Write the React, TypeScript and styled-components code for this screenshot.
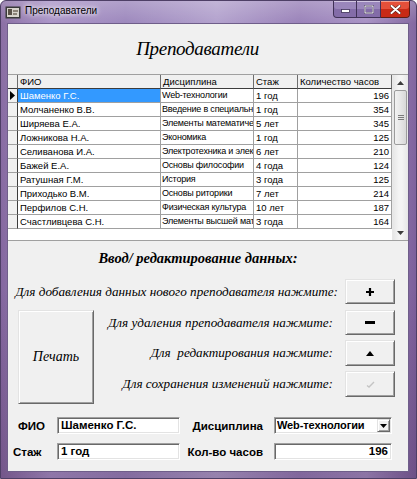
import React from "react";
import styled, { createGlobalStyle } from "styled-components";

const GlobalStyle = createGlobalStyle`
  html, body {
    margin: 0;
    padding: 0;
    background: #fff;
  }
  body {
    width: 417px;
    height: 479px;
    overflow: hidden;
    font-family: "Liberation Sans", Arial, sans-serif;
  }
`;

interface ITeacher {
    fio: string;
    subject: string;
    exp: string;
    hours: number;
}

// дисциплины обрезаны так же, как в ячейках исходной таблицы
const teachers: ITeacher[] = [
    { fio: "Шаменко Г.С.", subject: "Web-технологии", exp: "1 год", hours: 196 },
    { fio: "Молчаненко В.В.", subject: "Введение в специальн", exp: "1 год", hours: 354 },
    { fio: "Ширяева Е.А.", subject: "Элементы математиче", exp: "5 лет", hours: 345 },
    { fio: "Ложникова Н.А.", subject: "Экономика", exp: "1 год", hours: 125 },
    { fio: "Селиванова И.А.", subject: "Электротехника и элек", exp: "6 лет", hours: 210 },
    { fio: "Бажей Е.А.", subject: "Основы философии", exp: "4 года", hours: 124 },
    { fio: "Ратушная Г.М.", subject: "История", exp: "3 года", hours: 125 },
    { fio: "Приходько В.М.", subject: "Основы риторики", exp: "7 лет", hours: 214 },
    { fio: "Перфилов С.Н.", subject: "Физическая культура", exp: "10 лет", hours: 187 },
    { fio: "Счастливцева С.Н.", subject: "Элементы высшей мат", exp: "3 года", hours: 164 },
];

const GRID_COLS = "10px 143px 93px 44px 94px";

const App = () => {
    return (
        <>
            <GlobalStyle />
            <Window>
                <TitleBar>
                    <TitleIcon width="16" height="13" viewBox="0 0 16 13">
                        <rect x="0.5" y="0.5" width="15" height="12" fill="#3a3a3a" />
                        <rect x="2" y="2" width="12" height="9" fill="#d8d4cc" />
                        <rect x="3" y="3" width="4" height="6" fill="#5a5248" />
                        <rect x="8" y="4" width="5" height="2" fill="#8c8478" />
                        <rect x="8" y="7" width="4" height="2" fill="#8c8478" />
                    </TitleIcon>
                    <TitleText>Преподаватели</TitleText>
                    <CaptionButtons>
                        <CaptionBtn $first>
                            <svg width="9" height="8" viewBox="0 0 9 8">
                                <rect x="0.5" y="4.5" width="8" height="3" fill="#fff" stroke="#3e3056" strokeWidth="0.8" />
                            </svg>
                        </CaptionBtn>
                        <CaptionBtn>
                            <svg width="10" height="9" viewBox="0 0 10 9">
                                <rect x="1" y="1" width="8" height="7" fill="none" stroke="#3e3056" strokeWidth="2" />
                                <rect x="1" y="1" width="8" height="7" fill="none" stroke="#fff" strokeWidth="1" />
                            </svg>
                        </CaptionBtn>
                        <CloseBtn>
                            <svg width="11" height="9" viewBox="0 0 11 9">
                                <path d="M1.5 1 L9.5 8 M9.5 1 L1.5 8" stroke="#5a1c14" strokeWidth="3.2" strokeLinecap="round" />
                                <path d="M1.5 1 L9.5 8 M9.5 1 L1.5 8" stroke="#fff" strokeWidth="2" strokeLinecap="round" />
                            </svg>
                        </CloseBtn>
                    </CaptionButtons>
                </TitleBar>

                <Client>
                    <Heading>Преподаватели</Heading>

                    <DataGrid>
                        <Table>
                            <GridRow>
                                <HeadCell />
                                <HeadCell>ФИО</HeadCell>
                                <HeadCell>Дисциплина</HeadCell>
                                <HeadCell>Стаж</HeadCell>
                                <HeadCell>Количество часов</HeadCell>
                            </GridRow>
                            {teachers.map((t, i) => (
                                <GridRow key={t.fio}>
                                    <IndicatorCell>
                                        {i === 0 && (
                                            <svg width="5" height="9" viewBox="0 0 5 9">
                                                <path d="M0 0 L5 4.5 L0 9 Z" fill="#000" />
                                            </svg>
                                        )}
                                    </IndicatorCell>
                                    <Cell $selected={i === 0}>{t.fio}</Cell>
                                    <Cell $tight>{t.subject}</Cell>
                                    <Cell>{t.exp}</Cell>
                                    <Cell $right>{t.hours}</Cell>
                                </GridRow>
                            ))}
                        </Table>
                        <ScrollBar>
                            <ScrollArrow>
                                <svg width="7" height="4" viewBox="0 0 7 4">
                                    <path d="M0 4 L3.5 0 L7 4 Z" fill="#3c3c3c" />
                                </svg>
                            </ScrollArrow>
                            <ScrollThumb>
                                <svg width="6" height="5" viewBox="0 0 6 5">
                                    <path d="M0 0.5 H6 M0 2.5 H6 M0 4.5 H6" stroke="#7a7a7a" strokeWidth="1" />
                                </svg>
                            </ScrollThumb>
                            <ScrollTrack />
                            <ScrollArrow>
                                <svg width="7" height="4" viewBox="0 0 7 4">
                                    <path d="M0 0 L3.5 4 L7 0 Z" fill="#3c3c3c" />
                                </svg>
                            </ScrollArrow>
                        </ScrollBar>
                    </DataGrid>

                    <SectionTitle>Ввод/ редактирование данных:</SectionTitle>

                    <ActionRow $gap={7}>
                        <ActionLabel>Для добавления данных нового преподавателя нажмите:</ActionLabel>
                        <Button3D $w={50} $h={25}>
                            <svg width="8" height="8" viewBox="0 0 8 8">
                                <path d="M4 0 V8 M0 4 H8" stroke="#000" strokeWidth="2.2" />
                            </svg>
                        </Button3D>
                    </ActionRow>

                    <ActionBlock>
                        <PrintButton $w={76} $h={94}>Печать</PrintButton>
                        <ActionList>
                            <ActionRow $gap={12}>
                                <ActionLabel>Для удаления преподавателя нажмите:</ActionLabel>
                                <Button3D $w={50} $h={25}>
                                    <svg width="10" height="3" viewBox="0 0 10 3">
                                        <rect width="10" height="3" fill="#000" />
                                    </svg>
                                </Button3D>
                            </ActionRow>
                            <ActionRow $gap={12}>
                                <ActionLabel>Для&nbsp; редактирования нажмите:</ActionLabel>
                                <Button3D $w={50} $h={26}>
                                    <svg width="8" height="5" viewBox="0 0 8 5">
                                        <path d="M0 5 L4 0 L8 5 Z" fill="#000" />
                                    </svg>
                                </Button3D>
                            </ActionRow>
                            <ActionRow $gap={12}>
                                <ActionLabel>Для сохранения изменений нажмите:</ActionLabel>
                                <Button3D $w={50} $h={26}>
                                    <svg width="9" height="7" viewBox="0 0 9 7">
                                        <path d="M1 4.5 L3 6 L8 1" stroke="#c4c4c4" strokeWidth="1.4" fill="none" />
                                    </svg>
                                </Button3D>
                            </ActionRow>
                        </ActionList>
                    </ActionBlock>

                    <Fields>
                        <FieldLabel $left={10}>ФИО</FieldLabel>
                        <TextBox>Шаменко Г.С.</TextBox>
                        <FieldLabel $right={11}>Дисциплина</FieldLabel>
                        <ComboBox>
                            <ComboText>Web-технологии</ComboText>
                            <ComboButton>
                                <svg width="7" height="4" viewBox="0 0 7 4">
                                    <path d="M0 0 L3.5 4 L7 0 Z" fill="#000" />
                                </svg>
                            </ComboButton>
                        </ComboBox>

                        <FieldLabel $left={5}>Стаж</FieldLabel>
                        <TextBox>1 год</TextBox>
                        <FieldLabel $right={11}>Кол-во часов</FieldLabel>
                        <TextBox $right>196</TextBox>
                    </Fields>
                </Client>
            </Window>
        </>
    );
};

export default App;

const Window = styled.div`
    width: 417px;
    height: 479px;
    box-sizing: border-box;
    display: flex;
    flex-direction: column;
    border: 1px solid #4e3f66;
    border-radius: 6px 6px 0 0;
    background:
        linear-gradient(180deg, rgba(255, 255, 255, 0.25) 0px, rgba(255, 255, 255, 0.06) 22px, rgba(0, 0, 0, 0) 60%, rgba(40, 10, 40, 0.18) 100%),
        linear-gradient(90deg, #84679f 0%, #a58ec4 12%, #9781b9 30%, #ae9cca 52%, #947bb5 72%, #a28bc0 88%, #7c5f9b 100%);
`;

const TitleBar = styled.div`
    height: 22px;
    display: flex;
    align-items: flex-start;
    padding-left: 4px;
`;

const TitleIcon = styled.svg`
    margin-top: 5px;
    flex-shrink: 0;
`;

const TitleText = styled.span`
    margin: 4px 0 0 4px;
    font-family: "Liberation Sans", Arial, sans-serif;
    font-size: 10px;
    color: #000;
    text-shadow: 0 0 4px #fff, 0 0 6px rgba(255, 255, 255, 0.8);
`;

const CaptionButtons = styled.div`
    margin-left: auto;
    margin-right: 6px;
    display: flex;
    height: 17px;
`;

const CaptionBtn = styled.div<{ $first?: boolean }>`
    width: 24px;
    height: 17px;
    box-sizing: border-box;
    display: flex;
    align-items: center;
    justify-content: center;
    background: #9a86bb;
    box-shadow: inset 0 -8px 0 #836ca8, inset 0 1px 0 #d2c6e2;
    border: 1px solid #3f3156;
    border-top: none;
    border-left-width: ${(p) => (p.$first ? 1 : 0)}px;
    border-radius: ${(p) => (p.$first ? "0 0 0 4px" : "0")};
`;

const CloseBtn = styled.div`
    width: 29px;
    height: 17px;
    box-sizing: border-box;
    display: flex;
    align-items: center;
    justify-content: center;
    background: #e4503a;
    box-shadow: inset 0 -8px 0 #c82a16, inset 0 1px 0 #f2a090;
    border: 1px solid #5e1d16;
    border-top: none;
    border-left: none;
    border-radius: 0 0 4px 0;
`;

const Client = styled.div`
    flex: 1;
    margin: 0 7px 6px 6px;
    display: flex;
    flex-direction: column;
    background: #f0f0f0;
    border: 1px solid #6f5e8a;
`;

const Heading = styled.div`
    height: 50px;
    padding-right: 21px;
    display: flex;
    align-items: center;
    justify-content: center;
    font-family: "Liberation Serif", "Times New Roman", serif;
    font-style: italic;
    font-size: 19px;
    letter-spacing: -0.3px;
    color: #000;
`;

const DataGrid = styled.div`
    height: 167px;
    box-sizing: border-box;
    display: flex;
    background: #fff;
    border-top: 1px solid #a0a0a0;
    border-bottom: 1px solid #a0a0a0;
`;

const Table = styled.div`
    flex: 1;
    display: flex;
    flex-direction: column;
    overflow: hidden;
`;

const GridRow = styled.div`
    display: grid;
    grid-template-columns: ${GRID_COLS};
    height: 14px;
`;

const HeadCell = styled.div`
    box-sizing: border-box;
    padding: 0 2px;
    background: #f0f0f0;
    border-right: 1px solid #6d6d6d;
    border-bottom: 1px solid #3c3c3c;
    font-size: 9.5px;
    line-height: 13px;
    white-space: nowrap;
    overflow: hidden;
    color: #000;
`;

const IndicatorCell = styled.div`
    box-sizing: border-box;
    background: #f0f0f0;
    border-right: 1px solid #3c3c3c;
    border-bottom: 1px solid #a0a0a0;
    display: flex;
    align-items: center;
    padding-left: 2px;
`;

const Cell = styled.div<{ $selected?: boolean; $right?: boolean; $tight?: boolean }>`
    box-sizing: border-box;
    padding: 0 ${(p) => (p.$tight ? 1 : 2)}px;
    border-right: 1px solid #a0a0a0;
    border-bottom: 1px solid #a0a0a0;
    background: ${(p) => (p.$selected ? "#3399ff" : "#fff")};
    color: ${(p) => (p.$selected ? "#fff" : "#000")};
    text-align: ${(p) => (p.$right ? "right" : "left")};
    font-size: ${(p) => (p.$tight ? 9 : 9.5)}px;
    letter-spacing: ${(p) => (p.$tight ? -0.2 : 0)}px;
    line-height: 13px;
    white-space: nowrap;
    overflow: hidden;
`;

const ScrollBar = styled.div`
    width: 16px;
    display: flex;
    flex-direction: column;
    background: linear-gradient(90deg, #e6e6e6, #f4f4f4 40%, #f4f4f4 60%, #e6e6e6);
    border-left: 1px solid #e8e8e8;
    box-sizing: border-box;
`;

const ScrollArrow = styled.div`
    height: 15px;
    display: flex;
    align-items: center;
    justify-content: center;
`;

const ScrollThumb = styled.div`
    height: 55px;
    margin: 0 1px;
    box-sizing: border-box;
    border: 1px solid #9c9c9c;
    border-radius: 2px;
    background: linear-gradient(90deg, #f2f2f2, #e6e6e6 50%, #d8d8d8);
    display: flex;
    align-items: center;
    justify-content: center;
`;

const ScrollTrack = styled.div`
    flex: 1;
`;

const SectionTitle = styled.div`
    margin-top: 8px;
    height: 18px;
    padding-right: 20px;
    text-align: center;
    font-family: "Liberation Serif", "Times New Roman", serif;
    font-style: italic;
    font-weight: bold;
    font-size: 14.5px;
    line-height: 18px;
    color: #000;
`;

const ActionRow = styled.div<{ $gap: number }>`
    display: flex;
    align-items: center;
    justify-content: flex-end;
    gap: ${(p) => p.$gap}px;
    padding-right: 13px;
    margin-top: 12px;
`;

const ActionLabel = styled.span`
    font-family: "Liberation Serif", "Times New Roman", serif;
    font-style: italic;
    font-size: 13.2px;
    color: #000;
    white-space: nowrap;
`;

const Button3D = styled.button<{ $w: number; $h: number }>`
    width: ${(p) => p.$w}px;
    height: ${(p) => p.$h}px;
    box-sizing: border-box;
    margin: 0;
    padding: 0;
    flex-shrink: 0;
    display: flex;
    align-items: center;
    justify-content: center;
    background: #f0f0f0;
    border: 1px solid;
    border-color: #e3e3e3 #696969 #696969 #e3e3e3;
    box-shadow: inset 1px 1px 0 #fff, inset -1px -1px 0 #a0a0a0;
`;

const PrintButton = styled(Button3D)`
    font-family: "Liberation Serif", "Times New Roman", serif;
    font-style: italic;
    font-size: 14px;
    color: #000;
`;

const ActionBlock = styled.div`
    display: flex;
    align-items: flex-start;
    margin-top: 6px;
    padding-left: 10px;

    ${ActionRow} {
        margin-top: 0;
    }
`;

const ActionList = styled.div`
    flex: 1;
    display: flex;
    flex-direction: column;
    gap: 5px;
`;

const Fields = styled.div`
    margin-top: 13px;
    display: grid;
    grid-template-columns: 49px 123px 94px 118px;
    grid-auto-rows: 17px;
    row-gap: 9px;
    font-family: "Liberation Sans", Arial, sans-serif;
    font-weight: bold;
    font-size: 11.5px;
`;

const FieldLabel = styled.div<{ $left?: number; $right?: number }>`
    align-self: center;
    justify-self: ${(p) => (p.$right !== undefined ? "end" : "start")};
    margin-left: ${(p) => p.$left ?? 0}px;
    margin-right: ${(p) => p.$right ?? 0}px;
    color: #000;
    white-space: nowrap;
`;

const TextBox = styled.div<{ $right?: boolean }>`
    box-sizing: border-box;
    height: 17px;
    padding: 0 3px;
    background: #fff;
    border: 1px solid;
    border-color: #a0a0a0 #fff #fff #a0a0a0;
    box-shadow: inset 1px 1px 0 #696969, inset -1px -1px 0 #e3e3e3;
    line-height: 15px;
    text-align: ${(p) => (p.$right ? "right" : "left")};
    white-space: nowrap;
    overflow: hidden;
    color: #000;
`;

const ComboBox = styled(TextBox)`
    display: flex;
    align-items: center;
    padding: 0 1px 0 2px;
`;

const ComboText = styled.span`
    flex: 1;
    font-size: 11px;
    letter-spacing: -0.1px;
    overflow: hidden;
`;

const ComboButton = styled.div`
    width: 13px;
    height: 13px;
    box-sizing: border-box;
    display: flex;
    align-items: center;
    justify-content: center;
    background: #f0f0f0;
    border: 1px solid;
    border-color: #e3e3e3 #696969 #696969 #e3e3e3;
    box-shadow: inset 1px 1px 0 #fff, inset -1px -1px 0 #a0a0a0;
`;
